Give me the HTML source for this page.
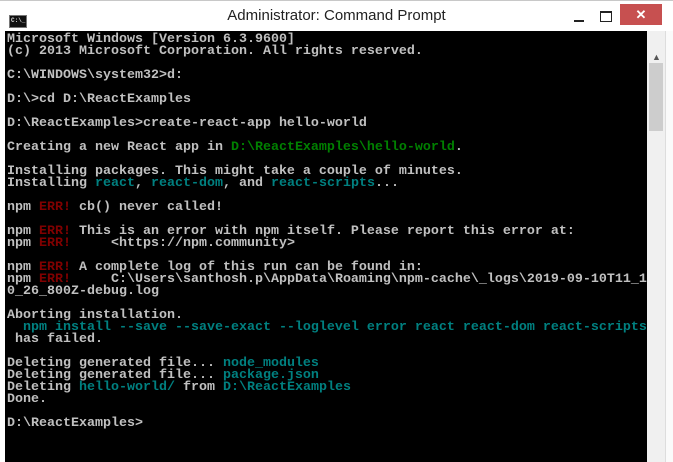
<!DOCTYPE html>
<html><head><style>
body{margin:0;width:673px;height:462px;overflow:hidden;background:#fff;position:relative;font-family:"Liberation Sans",sans-serif}
#title{position:absolute;left:0;top:0;width:673px;height:31px;background:#fff;border-top:1px solid #c8c8c8;box-sizing:border-box}
#t{position:absolute;left:0;width:673px;top:6px;text-align:center;font-size:15px;color:#222}
#con{position:absolute;left:5px;top:31px;width:642px;height:431px;background:#000}
pre{margin:0;position:absolute;left:7px;top:34px;font-family:"Liberation Mono",monospace;font-size:13.33px;line-height:12px;color:#c0c0c0;font-weight:bold;letter-spacing:0}
.r{color:#800000}.g{color:#008000}.c{color:#008080}
#sb{position:absolute;left:647px;top:31px;width:18px;height:431px;background:#f0f0f0}
#thumb{position:absolute;left:649px;top:63px;width:14px;height:68px;background:#cdcdcd}
#rf{position:absolute;left:665px;top:31px;width:8px;height:431px;background:#fafafa;border-left:1px solid #ddd}
</style></head><body>
<div id="title">
<div style="position:absolute;left:9px;top:14px;width:16px;height:11px;background:#111;border:1px solid #777"><span style="position:absolute;left:1px;top:1px;font:bold 6px 'Liberation Mono',monospace;color:#ddd">C:\_</span></div>
<div id="t">Administrator: Command Prompt</div>
<div style="position:absolute;left:574px;top:19px;width:10px;height:2px;background:#222"></div>
<div style="position:absolute;left:600px;top:10px;width:10px;height:8px;border:1px solid #222;border-top-width:2px"></div>
<div style="position:absolute;left:620px;top:3px;width:42px;height:21px;background:#c75050;color:#fff;text-align:center;font:bold 13px 'Liberation Sans',sans-serif;line-height:21px">✕</div>
</div>
<div id="con"></div>
<div id="sb"><div style="position:absolute;left:5px;top:21px;font-size:9px;color:#555">▲</div></div>
<div id="thumb"></div>
<div id="rf"></div>
<pre>Microsoft Windows [Version 6.3.9600]
(c) 2013 Microsoft Corporation. All rights reserved.

C:\WINDOWS\system32&gt;d:

D:\&gt;cd D:\ReactExamples

D:\ReactExamples&gt;create-react-app hello-world

Creating a new React app in <span class="g">D:\ReactExamples\hello-world</span>.

Installing packages. This might take a couple of minutes.
Installing <span class="c">react</span>, <span class="c">react-dom</span>, and <span class="c">react-scripts</span>...

npm <span class="r">ERR!</span> cb() never called!

npm <span class="r">ERR!</span> This is an error with npm itself. Please report this error at:
npm <span class="r">ERR!</span>     &lt;https://npm.community&gt;

npm <span class="r">ERR!</span> A complete log of this run can be found in:
npm <span class="r">ERR!</span>     C:\Users\santhosh.p\AppData\Roaming\npm-cache\_logs\2019-09-10T11_1
0_26_800Z-debug.log

Aborting installation.
<span class="c">  npm install --save --save-exact --loglevel error react react-dom react-scripts</span>
 has failed.

Deleting generated file... <span class="c">node_modules</span>
Deleting generated file... <span class="c">package.json</span>
Deleting <span class="c">hello-world/</span> from <span class="c">D:\ReactExamples</span>
Done.

D:\ReactExamples&gt;</pre>
</body></html>
